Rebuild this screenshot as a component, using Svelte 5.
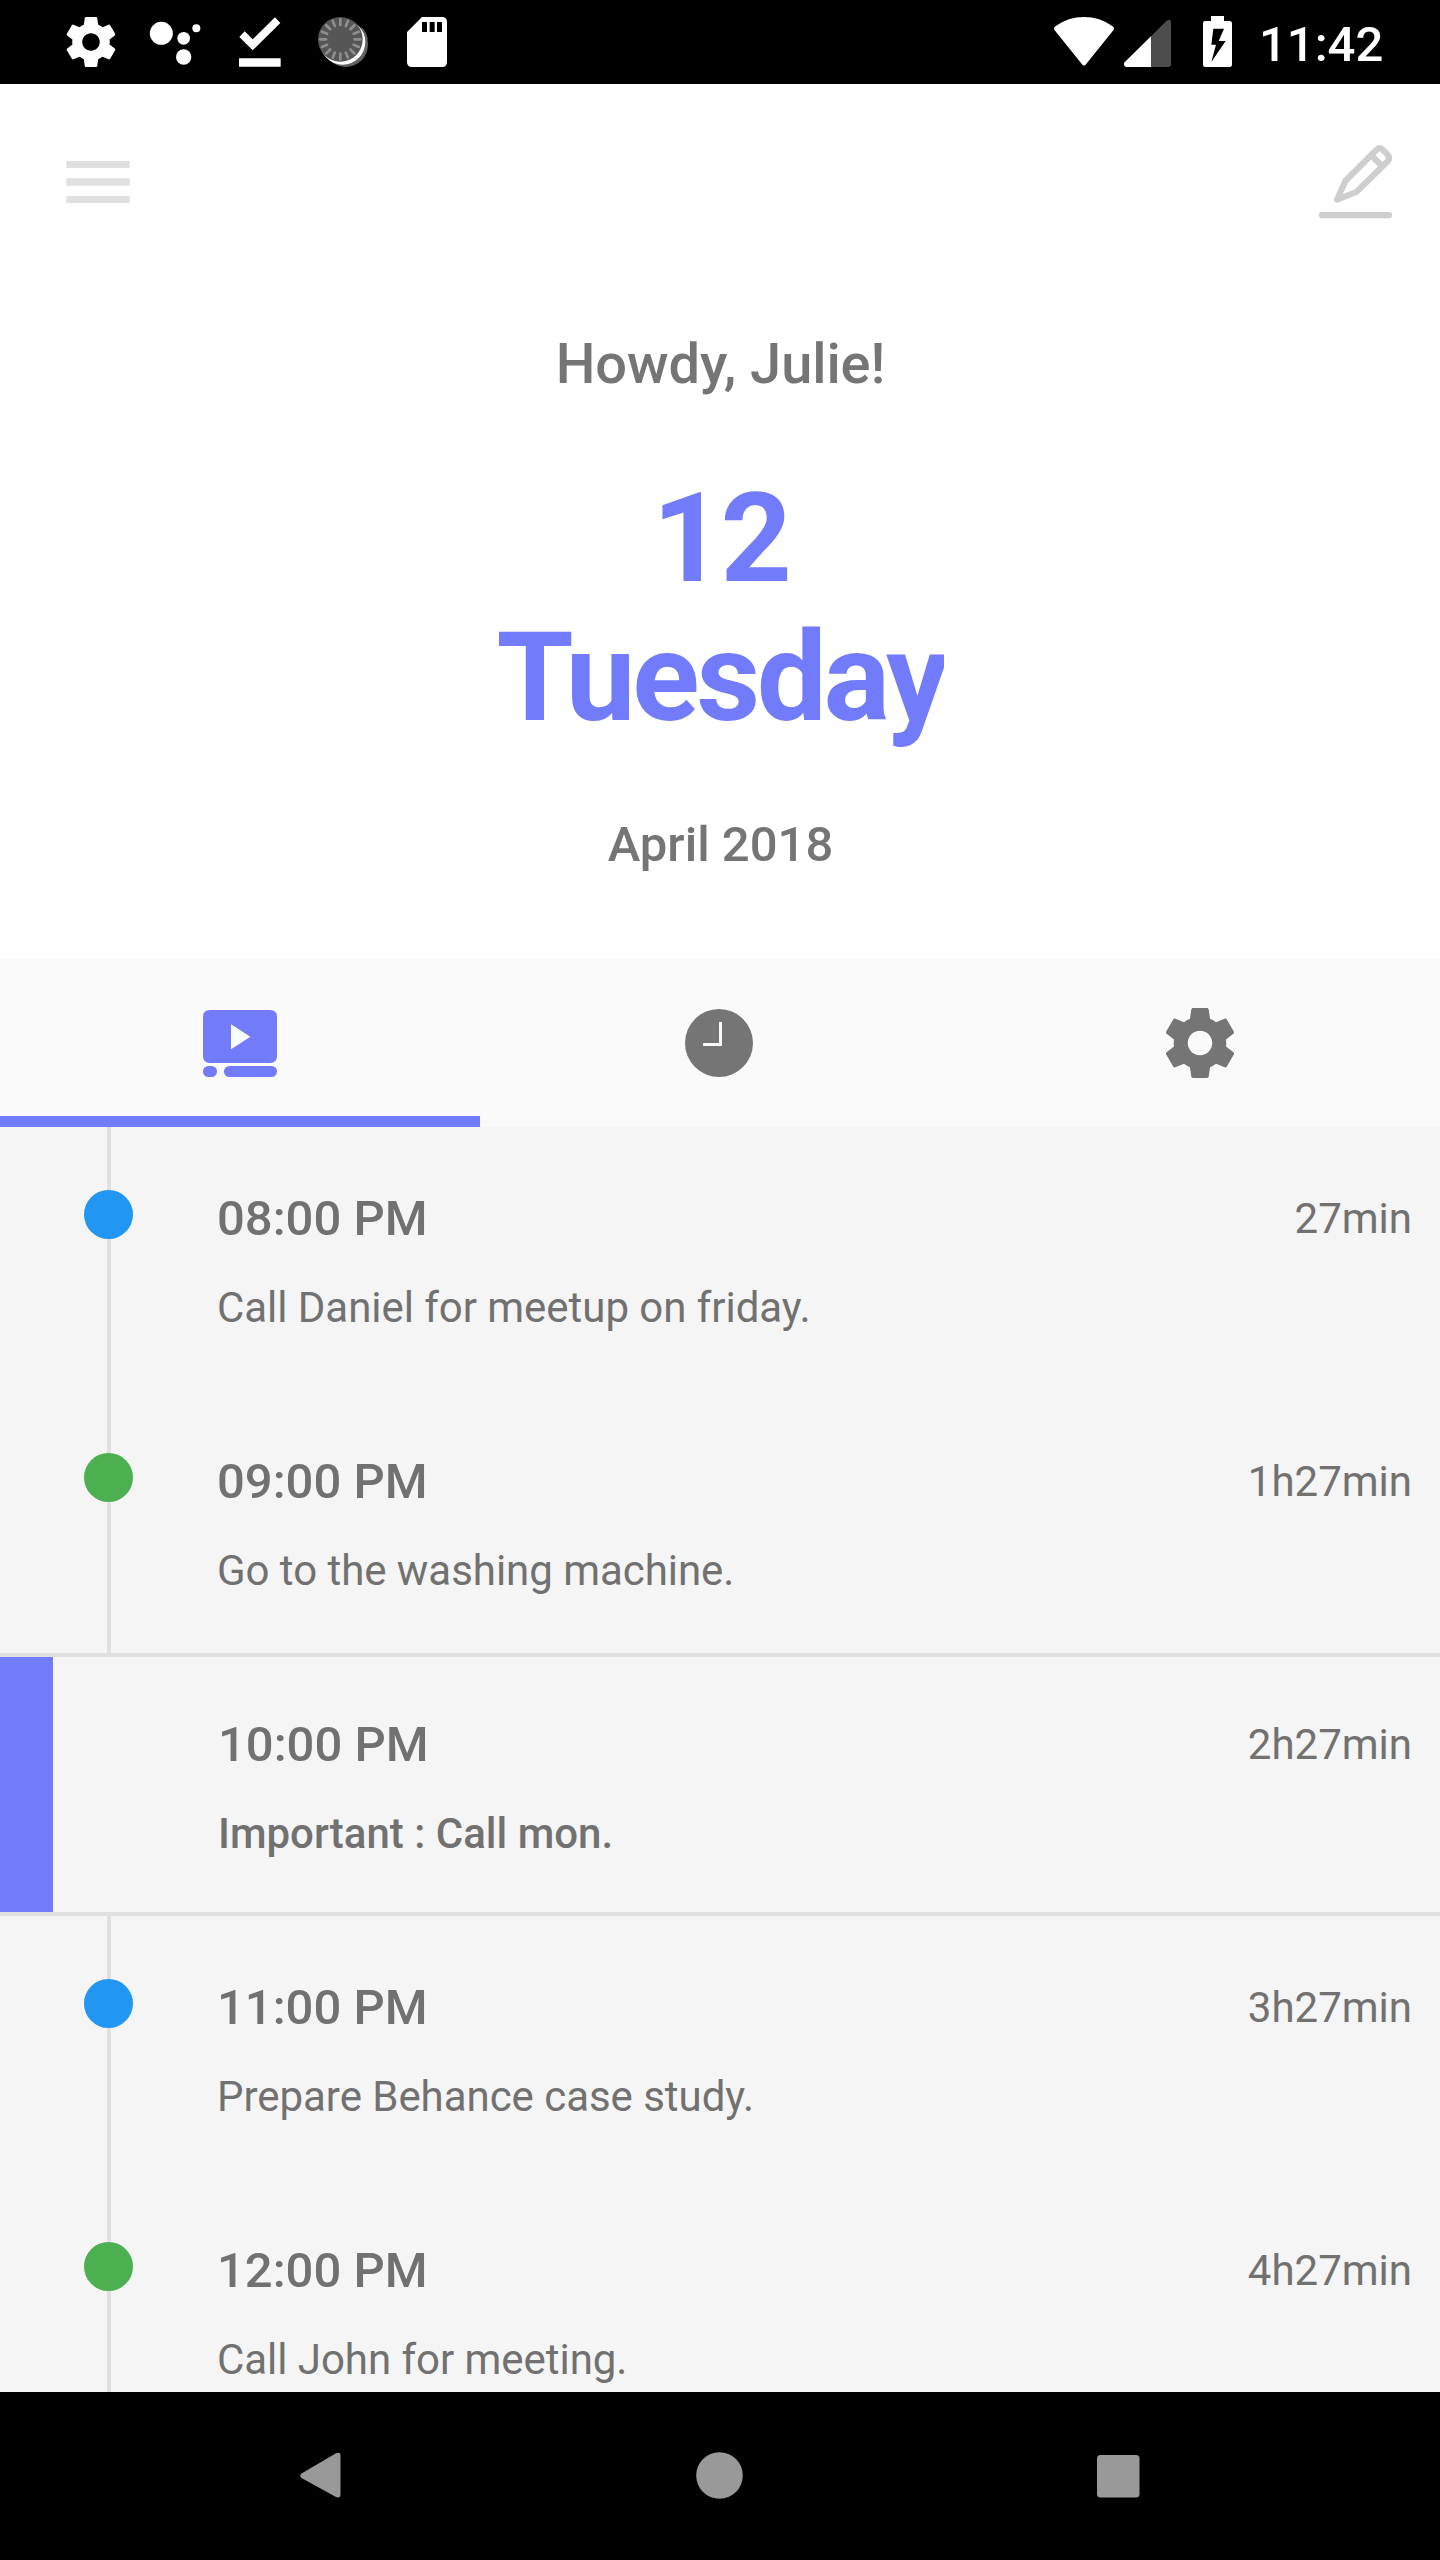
<script>
  const gear =
    'M19.43 12.98c.04-.32.07-.64.07-.98s-.03-.66-.07-.98l2.11-1.65c.19-.15.24-.42.12-.64l-2-3.46c-.12-.22-.39-.3-.61-.22l-2.49 1c-.52-.4-1.08-.73-1.69-.98l-.38-2.65C14.46 2.18 14.25 2 14 2h-4c-.25 0-.46.18-.49.42l-.38 2.65c-.61.25-1.17.59-1.69.98l-2.49-1c-.23-.09-.49 0-.61.22l-2 3.46c-.13.22-.07.49.12.64l2.11 1.65c-.04.32-.07.65-.07.98s.03.66.07.98l-2.11 1.65c-.19.15-.24.42-.12.64l2 3.46c.12.22.39.3.61.22l2.49-1c.52.4 1.08.73 1.69.98l.38 2.65c.03.24.24.42.49.42h4c.25 0 .46-.18.49-.42l.38-2.65c.61-.25 1.17-.59 1.69-.98l2.49 1c.23.09.49 0 .61-.22l2-3.46c.12-.22.07-.49-.12-.64l-2.11-1.65zM12 15.5c-1.93 0-3.5-1.57-3.5-3.5s1.57-3.5 3.5-3.5 3.5 1.57 3.5 3.5-1.57 3.5-3.5 3.5z';

  const ticks = Array.from({ length: 16 }, (_, i) => i * 22.5);

  const items = [
    { time: '08:00 PM', text: 'Call Daniel for meetup on friday.', left: '27min', color: 'blue' },
    { time: '09:00 PM', text: 'Go to the washing machine.', left: '1h27min', color: 'green' },
    { time: '10:00 PM', text: 'Important : Call mon.', left: '2h27min', important: true },
    { time: '11:00 PM', text: 'Prepare Behance case study.', left: '3h27min', color: 'blue' },
    { time: '12:00 PM', text: 'Call John for meeting.', left: '4h27min', color: 'green' },
  ];
</script>

<div class="screen">
  <div class="status">
    <div class="notifications">
      <svg viewBox="27 0 252 252"><path transform="translate(63 36) scale(7.5)" d={gear} /></svg>
      <svg viewBox="279 0 252 252">
        <circle cx="364" cy="100" r="34.5" /><circle cx="431" cy="115" r="19" />
        <circle cx="469" cy="85" r="12" /><circle cx="431" cy="171" r="23" />
      </svg>
      <svg viewBox="531 0 252 252">
        <path d="M598 111l16-17 24 24 67-66 16 17-83 82zM597 174.500h125v26H597z" />
      </svg>
      <svg viewBox="783 0 252 252">
        <circle cx="917" cy="134" r="67" fill="#616161" />
        <circle cx="908" cy="126" r="68" />
        <circle cx="901" cy="118" r="67" fill="#565656" />
        <path d="M963 84q13 8 19 34" fill="none" stroke="#616161" stroke-width="4" />
        {#each ticks as angle}
          <path class="tick" d="M901 75V58" transform="rotate({angle} 901 118)" />
        {/each}
      </svg>
      <svg viewBox="1035 0 252 252">
        <path d="M1146 51h60q15 0 15 15v120q0 15-15 15h-90q-15 0-15-15V96zM1146 66v30h15V66zM1169 66v30h15V66zM1191 66v30h15V66z" fill-rule="evenodd" />
      </svg>
    </div>
    <div class="system">
      <svg class="wifi" viewBox="60 0 204 252">
        <path d="M76 79Q114 51 162 51T248 79Q255 84 250 91L168 193Q162 200 156 193L74 91Q69 84 76 79z" />
      </svg>
      <svg class="signal" viewBox="264 0 234 252">
        <path d="M284 187L410 62Q423 55 423 68V193Q423 201 415 201H289Q278 197 284 187z" fill="#4d4d4d" />
        <path d="M284 187L363 109V201H289Q278 197 284 187z" />
      </svg>
      <svg class="battery" viewBox="498 0 129 252">
        <path d="M543 48h39v15h17q7 0 7 7v124q0 7-7 7h-73q-7 0-7-7V70q0-7 7-7h17zM550 86l-6 48h14l-14 52 43-63h-21l16-37z" fill-rule="evenodd" />
      </svg>
      <span class="clock">11:42</span>
    </div>
  </div>

  <header>
    <div class="toolbar">
      <svg class="menu" viewBox="0 0 64 42"><path d="M.3 0h63.4v7H.3zM.3 17.300h63.400v7.400H.3zM.3 35h63.400v7H.3z" /></svg>
      <svg class="edit" viewBox="861 426 234 240">
        <path d="M921 599L946 543L1039 450Q1049 439 1059 450L1072 463Q1083 474 1072 485L979 576ZM1026 468L1053 495" />
        <path d="M876 645.500H1077" />
      </svg>
    </div>
    <div class="greeting">Howdy, Julie!</div>
    <div class="day">12</div>
    <div class="day weekday">Tuesday</div>
    <div class="month">April 2018</div>
  </header>

  <nav class="tabs">
    <div class="tab active">
      <svg class="feed" viewBox="0 0 74 67">
        <path d="M7 0h60q7 0 7 7v39q0 7-7 7H7q-7 0-7-7V7q0-7 7-7zM28 14.300v25l19.400-12.500z" fill-rule="evenodd" />
        <rect x="0" y="56" width="14" height="11" rx="5.500" /><rect x="21" y="56" width="53" height="11" rx="5.500" />
      </svg>
    </div>
    <div class="tab">
      <svg class="time-icon" viewBox="0 0 68 68">
        <circle cx="34" cy="34" r="34" /><path d="M34 13h3v24H18v-3h16z" fill="#fafafa" />
      </svg>
    </div>
    <div class="tab"><svg class="gear" viewBox="0 0 24 24"><path d={gear} /></svg></div>
  </nav>

  <main>
    {#each items as item}
      <section class="item" class:important={item.important}>
        <div class="rail">
          {#if !item.important}<span class="dot {item.color}"></span>{/if}
        </div>
        <div class="body">
          <div class="time">{item.time}</div>
          <div class="text">{item.text}</div>
        </div>
        <div class="left">{item.left}</div>
      </section>
    {/each}
  </main>

  <footer>
    <svg viewBox="0 0 48 48"><path d="M6.500 21.500L41 1.200Q45.500-.5 45.500 3V43Q45.500 46.500 41 45L6.500 26Q4 23.500 6.500 21.500z" /></svg>
    <svg viewBox="0 0 48 48"><circle cx="24.500" cy="23.500" r="23.300" /></svg>
    <svg viewBox="0 0 48 48"><rect x="2" y="3" width="42.500" height="42.500" rx="3.500" /></svg>
  </footer>
</div>

<style>
  :global(body) { background: #000; }
  .screen {
    width: 1440px; height: 2560px; display: flex; flex-direction: column;
    overflow: hidden; background: #fff; color: #757575;
    font-family: Roboto, sans-serif; font-weight: 400;
  }
  svg { display: block; flex: none; }
  .status {
    height: 84px; flex: none; display: flex; justify-content: space-between;
    background: #000; fill: #fff; color: #fff;
  }
  .notifications { display: flex; padding-left: 49px; }
  .notifications svg { width: 84px; height: 84px; }
  .tick { stroke: #8e8e8e; stroke-width: 8; stroke-linecap: round; }
  .system { display: flex; width: 390px; }
  .system svg { height: 84px; }
  .wifi { width: 68px; }
  .signal { width: 78px; }
  .battery { width: 43px; }
  .clock { padding: 16px 0 0 20px; font-size: 49px; line-height: 57px; font-weight: 500; }

  header { height: 875px; flex: none; display: flex; flex-direction: column; text-align: center; }
  .toolbar { height: 247px; display: flex; justify-content: space-between; padding: 0 45px 0 66px; box-sizing: border-box; }
  .menu { width: 64px; height: 42px; margin-top: 77px; fill: #e0e0e0; }
  .edit { width: 78px; height: 80px; margin-top: 58px; fill: none; stroke: #cecece; stroke-width: 18.500; stroke-linejoin: round; stroke-linecap: round; }
  .greeting { padding-left: 1px; font-size: 56px; line-height: 66px; font-weight: 500; letter-spacing: -0.080px; }
  .day {
    margin-top: 72px; padding-left: 1px; font-size: 124.500px; line-height: 139px;
    font-weight: 700; letter-spacing: -3.300px; color: #727cfb;
  }
  .day.weekday {
    width: 447px; align-self: center; margin-top: 0; padding-left: 0;
    text-align: left; white-space: nowrap; overflow-x: clip;
  }
  .month { margin-top: 69px; padding-left: 1px; font-size: 49px; line-height: 57px; font-weight: 500; }

  .tabs { height: 168px; flex: none; display: grid; grid-template-columns: repeat(3, 1fr); background: #fafafa; fill: #757575; }
  .tab { display: flex; align-items: center; justify-content: center; box-sizing: border-box; }
  .tab.active { fill: #727cfb; border-bottom: 11px solid #727cfb; padding-top: 11px; }
  .feed { width: 74px; height: 67px; }
  .time-icon { width: 68px; height: 68px; margin-right: 2px; }
  .gear { width: 84px; height: 84px; }

  main { height: 1265px; flex: none; overflow: hidden; background: #f5f5f5; color: #717171; }
  .item { height: 263px; box-sizing: border-box; display: grid; grid-template-columns: 217px 1fr auto; padding-right: 28px; }
  .rail { display: flex; padding: 63px 0 0 84px; background: linear-gradient(#e0e0e0, #e0e0e0) 107px 0 / 4px 100% no-repeat; }
  .dot { width: 49px; height: 49px; border-radius: 50%; }
  .blue { background: #2196f3; }
  .green { background: #4caf50; }
  .body { padding-top: 63px; }
  .time { font-size: 49px; line-height: 57px; font-weight: 500; }
  .text { margin-top: 36px; font-size: 42px; line-height: 49px; letter-spacing: -0.040px; }
  .left { padding-top: 67px; font-size: 42px; line-height: 49px; }
  .important { border: solid #e0e0e0; border-width: 4px 0; grid-template-columns: 218px 1fr auto; }
  .important .rail { padding: 0; width: 53px; background: #727cfb; }
  .important .body { padding-top: 59px; }
  .important .left { padding-top: 63px; }
  .important .text { font-weight: 500; letter-spacing: 0; }

  footer { height: 168px; flex: none; display: flex; justify-content: space-between; align-items: center; padding: 0 297px 0 295px; box-sizing: border-box; background: #000; fill: #999; }
  footer svg { width: 48px; height: 48px; }
</style>
